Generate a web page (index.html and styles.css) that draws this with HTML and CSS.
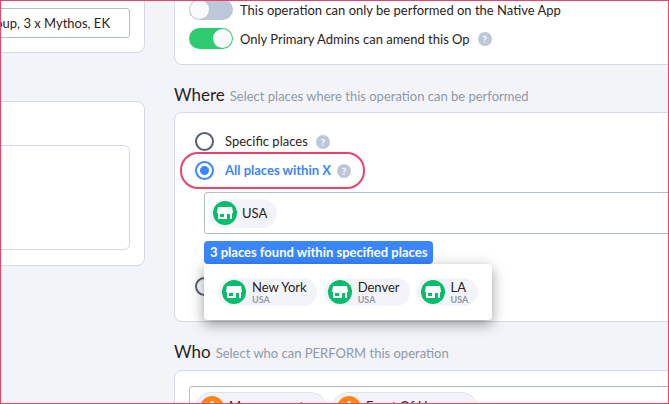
FILE: index.html
```html
<!DOCTYPE html>
<html lang="en">
<head>
<meta charset="utf-8">
<title>Operation settings</title>
<link rel="stylesheet" href="styles.css">
</head>
<body>
<svg class="sprite" aria-hidden="true">
  <symbol id="store" viewBox="0 0 24 24">
    <circle cx="12" cy="12" r="12" fill="#07bd6c"/>
    <path d="M5 6H19L20 11V12H19V18H17V13H14V18H5V12H4V11ZM7 13V16H11V13Z" fill="#fff" fill-rule="evenodd"/>
  </symbol>
  <symbol id="team" viewBox="0 0 24 24">
    <circle cx="12" cy="12" r="12" fill="#ff8412"/>
    <g fill="#fff"><circle cx="12" cy="7" r="2"/><circle cx="6.500" cy="8" r="1.500"/><circle cx="17.500" cy="8" r="1.500"/><path d="M8 17V13Q8 10 12 10T16 13V17ZM3.500 16V13Q3.500 10.500 7 10.500V16ZM17 16V10.500Q20.500 10.500 20.500 13V16Z"/></g>
  </symbol>
</svg>
<div class="page">
  <aside class="side">
    <section class="card side-first">
      <input class="field" type="text" aria-label="Groups" value="oup, 3 x Mythos, EK">
    </section>
    <section class="card side-second">
      <textarea class="notes" aria-label="Notes"></textarea>
    </section>
  </aside>
  <main class="main">
    <section class="card options">
      <div class="row"><input class="switch" type="checkbox" id="native"><label for="native">This operation can only be performed on the Native App</label></div>
      <div class="row"><input class="switch" type="checkbox" id="admins" checked><label for="admins">Only Primary Admins can amend this Op</label><button class="help" type="button">?</button></div>
    </section>
    <header class="heading"><h2>Where</h2><p>Select places where this operation can be performed</p></header>
    <section class="card where">
      <div class="choice"><input type="radio" name="places" id="specific"><label for="specific">Specific places</label><button class="help" type="button">?</button></div>
      <div class="choice marked"><input type="radio" name="places" id="within" checked><label for="within">All places within X</label><button class="help" type="button">?</button></div>
      <div class="picker">
        <span class="chip"><svg class="icon"><use href="#store"/></svg>USA</span>
      </div>
      <div class="found">
        <button class="count" type="button">3 places found within specified places</button>
        <div class="popup">
          <span class="chip place"><svg class="icon"><use href="#store"/></svg><span class="name">New York<small>USA</small></span></span>
          <span class="chip place"><svg class="icon"><use href="#store"/></svg><span class="name">Denver<small>USA</small></span></span>
          <span class="chip place"><svg class="icon"><use href="#store"/></svg><span class="name">LA<small>USA</small></span></span>
        </div>
      </div>
      <div class="choice last"><input type="radio" name="places" aria-label="Other places"></div>
    </section>
    <header class="heading"><h2>Who</h2><p>Select who can PERFORM this operation</p></header>
    <section class="card who">
      <div class="picker people">
        <span class="chip"><svg class="icon"><use href="#team"/></svg><span class="person">Management</span></span>
        <span class="chip"><svg class="icon"><use href="#team"/></svg><span class="person">Front Of House</span></span>
      </div>
    </section>
  </main>
</div>
</body>
</html>
```
FILE: styles.css
```css
* { box-sizing: border-box; }

body {
  margin: 0;
  height: 100vh;
  overflow: hidden;
  background: #f3f4f9;
  color: #2a2320;
  font: 13px/20px Lato, "Liberation Sans", sans-serif;
}

/* Frame around the whole view */
body::after {
  content: "";
  position: fixed;
  inset: 0;
  border: 1px solid #ee4266;
  pointer-events: none;
}

input, textarea, button { font: inherit; color: inherit; margin: 0; }
.sprite { display: none; }

.page {
  display: grid;
  grid-template-columns: 145px minmax(0, 1fr);
  column-gap: 29px;
  margin-right: -12px;
}

.card {
  background: #fff;
  border: 1px solid #d3d9e6;
  border-radius: 8px;
}

.side .card { margin-left: -20px; padding: 0 14px 14px 0; }
.side .side-first { border-top: 0; border-radius: 0 0 8px 0; padding-top: 8px; }
.side .side-second { margin-top: 48px; padding-top: 43px; padding-bottom: 15px; }
.field {
  display: block;
  width: 100%;
  height: 30px;
  padding: 0 19px 0 0;
  border: 1px solid #b4bec5;
  border-radius: 3px;
  text-align: right;
}
.notes {
  display: block;
  width: 100%;
  height: 105px;
  border: 1px solid #d3d9e6;
  border-radius: 6px;
  resize: none;
}

.options {
  display: grid;
  gap: 8px;
  margin-top: -1px;
  padding: 0 14px 15px;
  border-top: 0;
  border-radius: 0 0 8px 8px;
}
.row { display: flex; align-items: center; height: 21px; }
.row label { margin-left: 7px; }

.switch {
  appearance: none;
  width: 44px;
  height: 21px;
  padding: 1px;
  border-radius: 11px;
  background: #bcc8d9;
}
.switch::before {
  content: "";
  display: block;
  width: 19px;
  height: 19px;
  border-radius: 50%;
  background: #fafafa;
}
.switch:checked { background: #2ecc71; }
.switch:checked::before { margin-left: auto; }

.help {
  width: 14px;
  height: 14px;
  margin-left: 8px;
  padding: 0;
  border: 0;
  border-radius: 50%;
  background: #bcc8d9;
  color: #fff;
  font-size: 10px;
  font-weight: 700;
  line-height: 14px;
}

.heading {
  display: flex;
  align-items: baseline;
  gap: 5px;
  height: 48px;
  padding-top: 18px;
}
.heading h2 { margin: 0; font-size: 17px; line-height: 24px; font-weight: 400; }
.heading p { margin: 0; color: #8f99a5; }

.where { height: 210px; margin-top: -1px; padding: 14px 0 27px; }
.choice {
  display: flex;
  align-items: center;
  height: 29px;
  padding-left: 20px;
}
.choice input {
  appearance: none;
  width: 19px;
  height: 19px;
  margin-right: 11px;
  border: 2px solid #56616d;
  border-radius: 50%;
}
.choice label { padding-bottom: 1px; }
.choice input:checked {
  border-color: #3a86ff;
  background: radial-gradient(circle, #3a86ff 4px, #fff 5px);
}
.marked {
  width: max-content;
  height: 37px;
  margin: -4px 0 3px 5px;
  padding: 0 12px 0 13px;
  border: 2px solid #ee4266;
  border-radius: 18px;
  color: #3a86ff;
  font-weight: 700;
}
.marked .help { margin-left: 6px; }

.picker {
  display: flex;
  align-items: center;
  gap: 5px;
  height: 42px;
  margin-left: 29px;
  padding-left: 4px;
  border: 1px solid #b4bec5;
  border-radius: 3px 0 0 3px;
}
.chip {
  display: inline-flex;
  align-items: center;
  gap: 5px;
  height: 29px;
  padding: 0 10px 0 4px;
  border-radius: 15px;
  background: #f3f4f9;
}
.icon { width: 24px; height: 24px; flex: none; }

.found { position: relative; width: max-content; margin: 7px 0 0 29px; }
.count {
  display: block;
  height: 23px;
  padding: 0 6px;
  border: 0;
  border-radius: 4px;
  background: #3a86ff;
  color: #fff;
  font-weight: 700;
  line-height: 23px;
}
.popup {
  position: absolute;
  top: 100%;
  left: 0;
  display: flex;
  gap: 7px;
  padding: 14px;
  border-radius: 0 4px 4px 4px;
  background: #fff;
  box-shadow: 0 4px 14px rgba(0, 0, 0, .4);
}
.place { gap: 6px; height: 28px; padding-right: 10px; }
.name { padding-bottom: 2px; line-height: 16px; white-space: nowrap; }
.name small { display: block; color: #8f99a5; font-size: 9px; line-height: 9px; font-weight: 700; }
.last { margin-top: 8px; }

.who { padding: 15px 0 15px 14px; }
.people { height: 48px; margin-left: 0; padding: 5px 0 0 5px; align-items: flex-start; }
.people .chip { height: 32px; padding-right: 22px; border: 1px solid #dfe3ec; border-radius: 16px; }
.person { padding-bottom: 5px; }
```
